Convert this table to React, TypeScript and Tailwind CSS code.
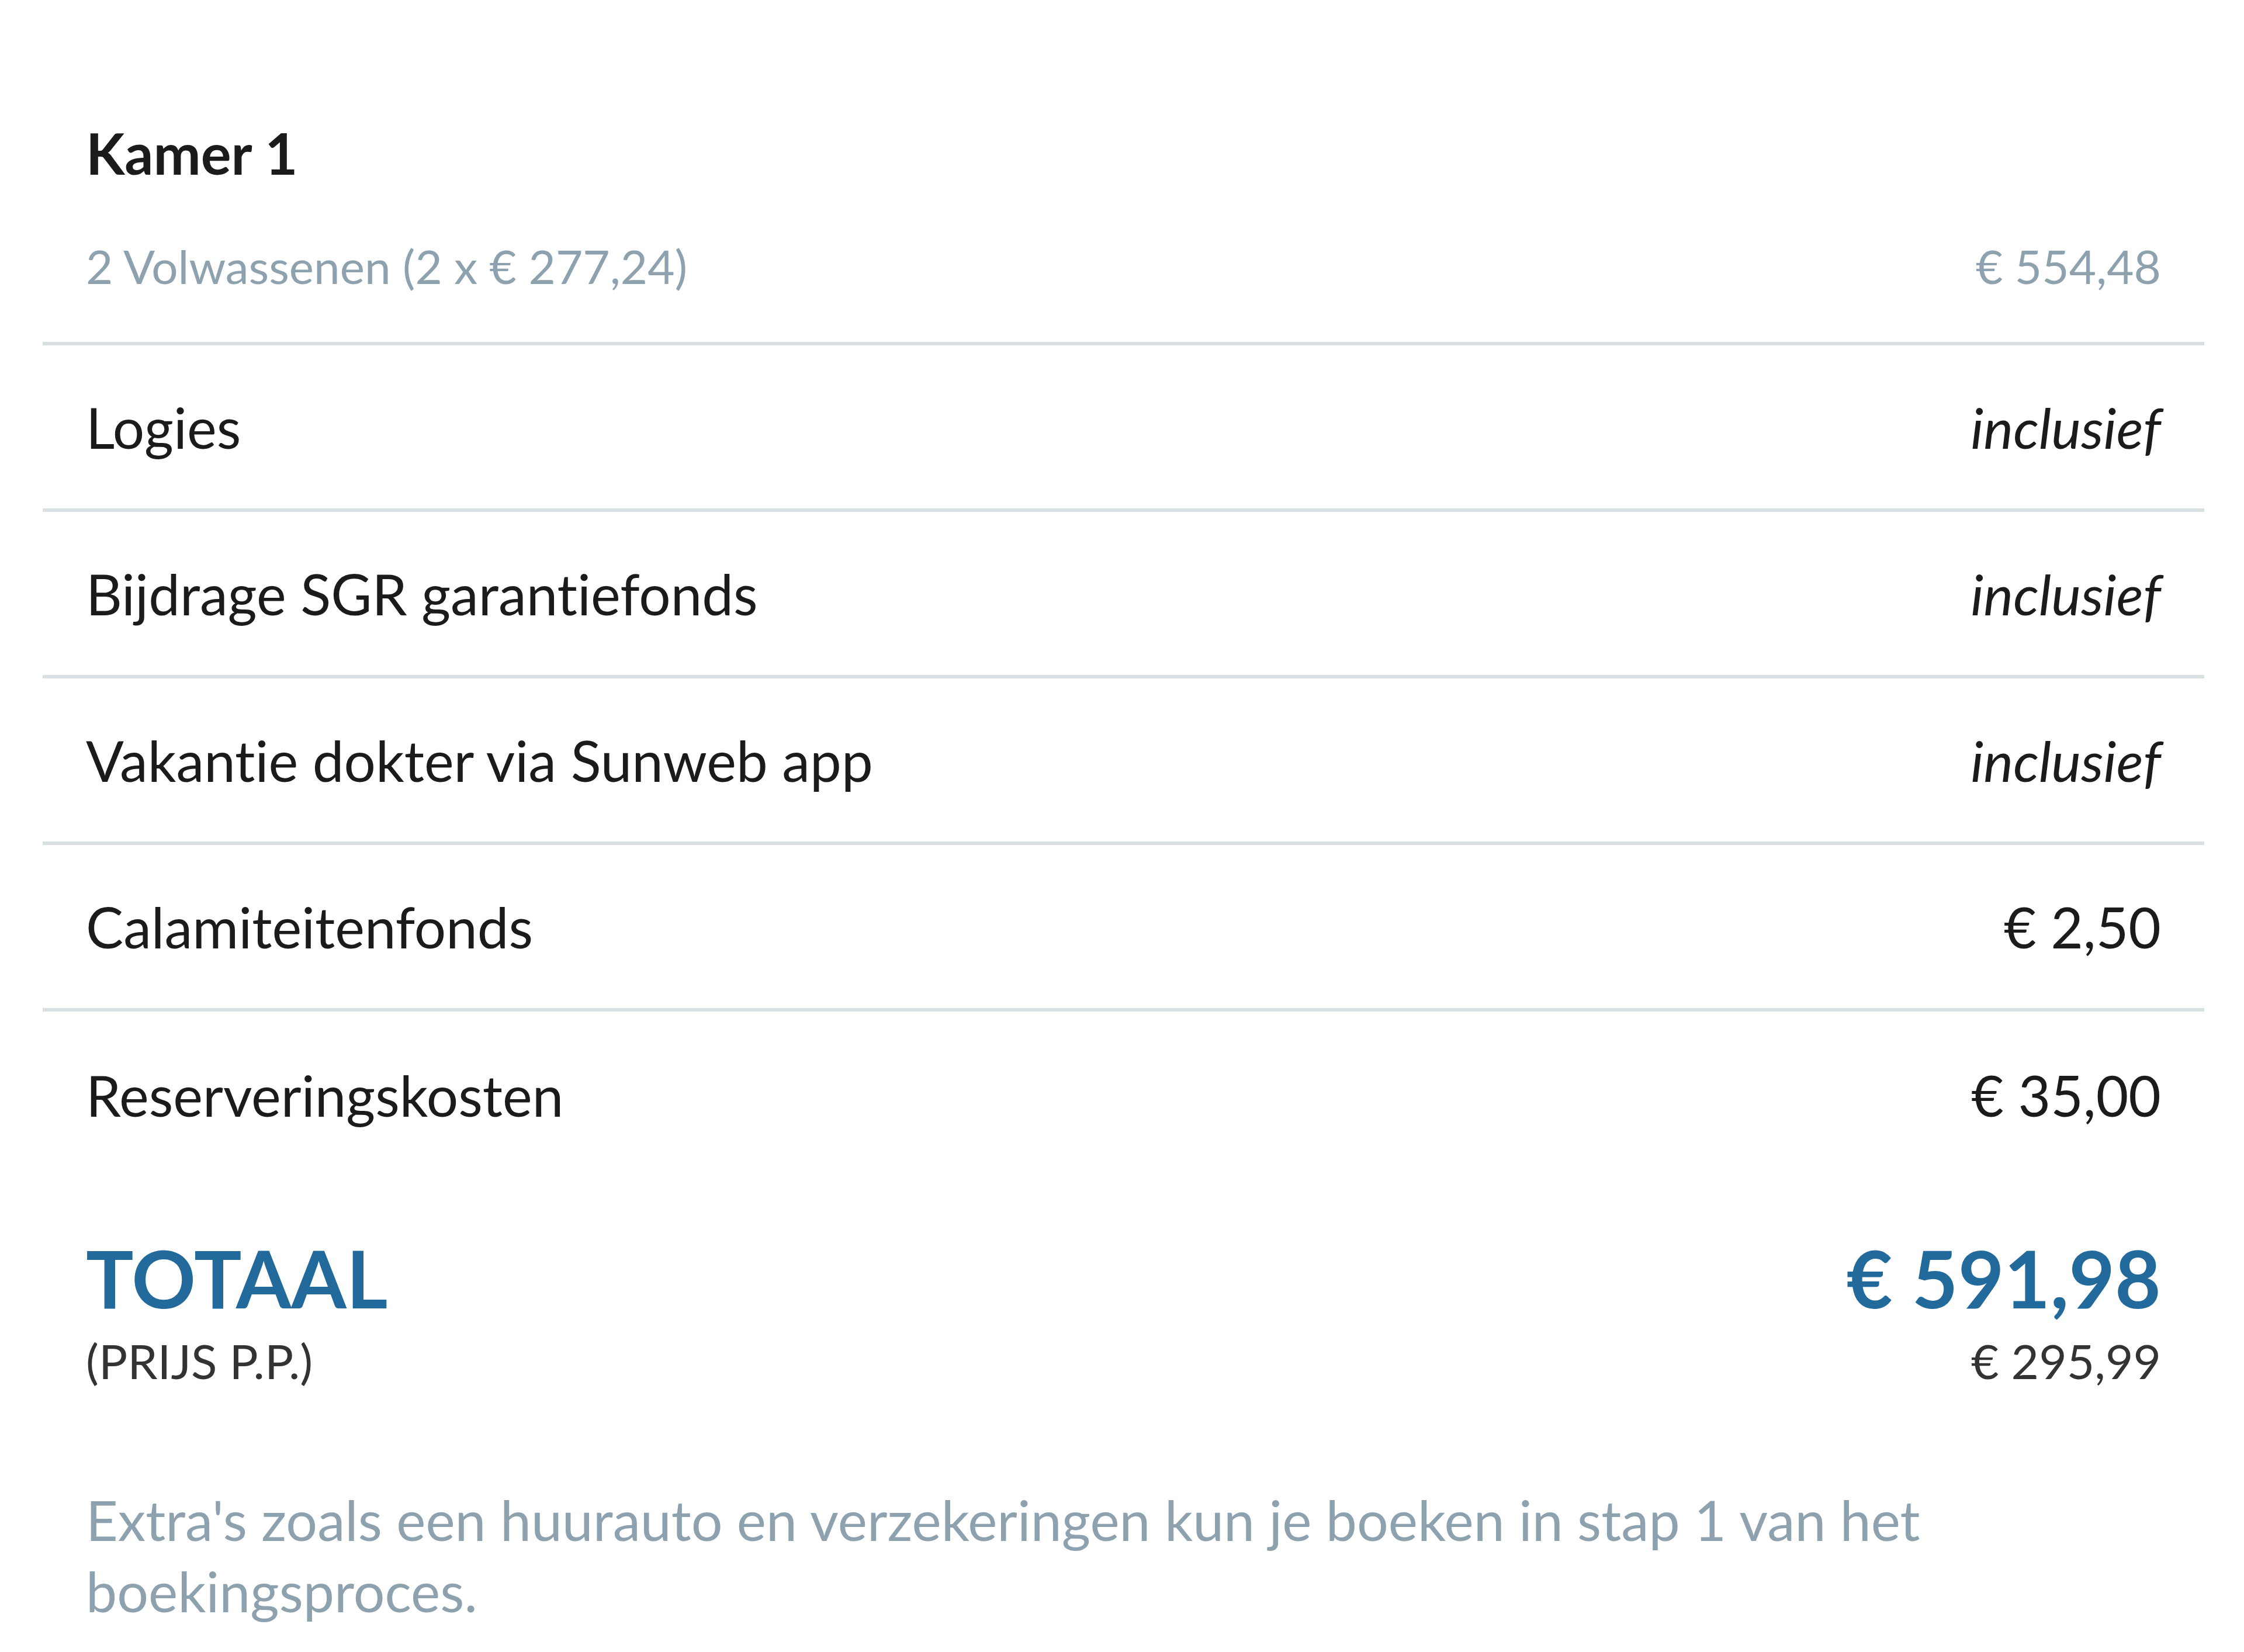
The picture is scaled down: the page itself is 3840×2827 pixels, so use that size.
const rows = [
  { label: "Logies", value: "inclusief", italic: true },
  { label: "Bijdrage SGR garantiefonds", value: "inclusief", italic: true },
  { label: "Vakantie dokter via Sunweb app", value: "inclusief", italic: true },
  { label: "Calamiteitenfonds", value: "€ 2,50", italic: false },
  { label: "Reserveringskosten", value: "€ 35,00", italic: false },
];

export default function App() {
  return (
    <div className="min-h-screen bg-white font-['Lato',sans-serif] text-[#1b1b1b] [font-variant-ligatures:no-common-ligatures]">
      <div className="ml-[73px] w-[3699px]">
        <div className="px-[74px] pt-[190px] pb-[58px] border-b-[6px] border-[#d9e0e4]">
          <h2 className="text-[97px] leading-[144px] font-bold">Kamer 1</h2>
          <div className="mt-[49px] flex justify-between text-[80px] leading-[144px] text-[#8da2ae]">
            <span>2 Volwassenen (2 x € 277,24)</span>
            <span>€ 554,48</span>
          </div>
        </div>

        {rows.map((row, i) => (
          <div
            key={row.label}
            className={`h-[285px] px-[74px] flex items-center justify-between text-[96px] ${
              i < rows.length - 1 ? "border-b-[6px] border-[#d9e0e4]" : ""
            }`}
          >
            <span>{row.label}</span>
            <span className={row.italic ? "italic" : ""}>{row.value}</span>
          </div>
        ))}

        <div className="px-[74px] mt-[96px]">
          <div className="flex justify-between items-center text-[136px] leading-[150px] font-bold text-[#236a9c]">
            <span>TOTAAL</span>
            <span>€ 591,98</span>
          </div>
          <div className="mt-[18px] flex justify-between text-[82px] leading-[96px] text-[#333]">
            <span>(PRIJS P.P.)</span>
            <span>€ 295,99</span>
          </div>
          <p className="mt-[163px] w-[3300px] text-[95px] leading-[122px] text-[#8da2ae]">
            Extra's zoals een huurauto en verzekeringen kun je boeken in stap 1 van het boekingsproces.
          </p>
        </div>
      </div>
    </div>
  );
}
